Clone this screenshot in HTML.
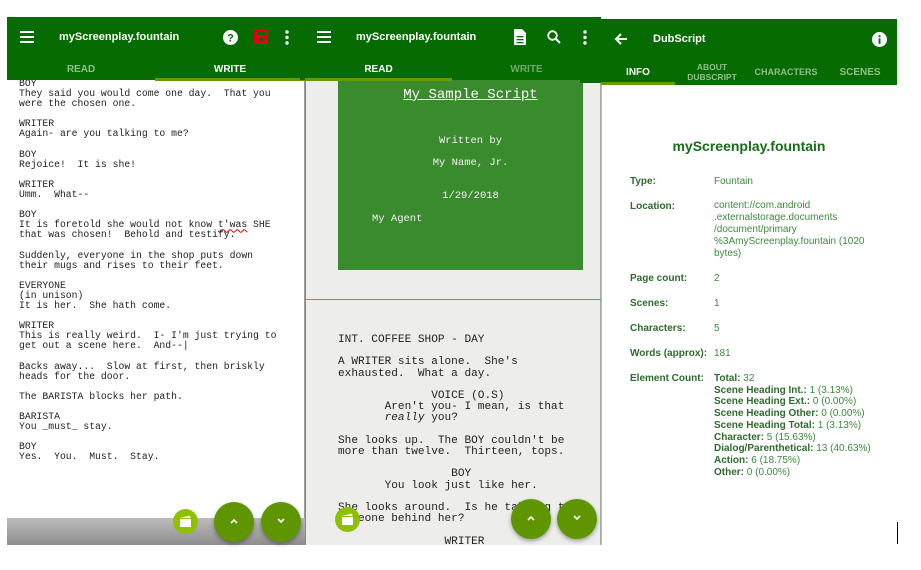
<!DOCTYPE html>
<html><head><meta charset="utf-8"><style>
*{margin:0;padding:0;box-sizing:border-box}
body{width:921px;height:570px;background:#fff;position:relative;overflow:hidden;font-family:"Liberation Sans",sans-serif}
.a{position:absolute}
.hdr{background:#066b00;color:#fff}
.title{font-size:11px;font-weight:bold;color:#fff;position:absolute}
.tab{position:absolute;font-size:10px;font-weight:bold;text-align:center}
.mono{font-family:"Liberation Mono",monospace;white-space:pre;position:absolute}
.p1 div{height:10.1px;line-height:10.1px}
.fab{position:absolute;border-radius:50%;background:#5f9600;box-shadow:0 2px 4px rgba(0,0,0,.35);color:#fff;text-align:center}
.sfab{position:absolute;border-radius:50%;background:#8dc100}
.lab{position:absolute;left:630px;font-size:10px;font-weight:bold;color:#2e6b2e}
.val{position:absolute;left:714px;font-size:10px;color:#3d8a3d;line-height:12px}
.val b{color:#2e6b2e}
</style></head><body>

<!-- Panel 1 -->
<div class="a" style="left:7px;top:80px;width:298px;height:438px;background:#fff;border-right:1px solid #999"></div>
<div class="a" style="left:7px;top:518px;width:298px;height:27px;background:linear-gradient(#bbb,#8e8e8e)"></div>
<div class="mono p1" style="left:19px;top:79px;font-size:9.75px;color:#222"><div>BOY</div><div>They said you would come one day.  That you</div><div>were the chosen one.</div><div> </div><div>WRITER</div><div>Again- are you talking to me?</div><div> </div><div>BOY</div><div>Rejoice!  It is she!</div><div> </div><div>WRITER</div><div>Umm.  What--</div><div> </div><div>BOY</div><div>It is foretold she would not know <span style="text-decoration:underline wavy #d00">t'was</span> SHE</div><div>that was chosen!  Behold and testify.</div><div> </div><div>Suddenly, everyone in the shop puts down</div><div>their mugs and rises to their feet.</div><div> </div><div>EVERYONE</div><div>(in unison)</div><div>It is her.  She hath come.</div><div> </div><div>WRITER</div><div>This is really weird.  I- I'm just trying to</div><div>get out a scene here.  And--|</div><div> </div><div>Backs away...  Slow at first, then briskly</div><div>heads for the door.</div><div> </div><div>The BARISTA blocks her path.</div><div> </div><div>BARISTA</div><div>You _must_ stay.</div><div> </div><div>BOY</div><div>Yes.  You.  Must.  Stay.</div></div>
<div class="a hdr" style="left:7px;top:17px;width:298px;height:63px"></div>
<svg class="a" style="left:20px;top:31px" width="14" height="12"><rect y="0" width="14" height="2" fill="#fff"/><rect y="5" width="14" height="2" fill="#fff"/><rect y="10" width="14" height="2" fill="#fff"/></svg>
<div class="title" style="left:59px;top:31px">myScreenplay.fountain</div>
<svg class="a" style="left:223px;top:30px" width="15" height="15"><circle cx="7.5" cy="7.5" r="7.5" fill="#fff"/><text x="7.5" y="11.5" font-size="11" font-weight="bold" text-anchor="middle" fill="#066b00" font-family="Liberation Sans">?</text></svg>
<svg class="a" style="left:254px;top:30px" width="14" height="14"><rect width="14" height="14" rx="1.5" fill="#e3001b"/><rect x="3" y="1" width="8" height="4" fill="#066b00"/><circle cx="7" cy="9.5" r="2.2" fill="#066b00"/></svg>
<svg class="a" style="left:285px;top:30px" width="4" height="15"><circle cx="2" cy="2" r="1.7" fill="#fff"/><circle cx="2" cy="7.5" r="1.7" fill="#fff"/><circle cx="2" cy="13" r="1.7" fill="#fff"/></svg>
<div class="tab" style="left:7px;top:64px;width:148px;color:#8fc08a">READ</div>
<div class="tab" style="left:155px;top:64px;width:150px;color:#fff">WRITE</div>
<div class="a" style="left:155px;top:78px;width:150px;height:3px;background:#6a9a00"></div>
<div class="sfab" style="left:173px;top:509px;width:25px;height:25px"></div>
<svg class="a" style="left:178px;top:514px" width="15" height="15"><path d="M2 4 L12 1.5 L12.5 4 Z" fill="#fff"/><rect x="2" y="5" width="11" height="8" fill="#fff"/></svg>
<div class="fab" style="left:214px;top:502px;width:40px;height:40px"></div>
<div class="fab" style="left:261px;top:502px;width:40px;height:40px"></div>
<svg class="a" style="left:229px;top:516px" width="10" height="10"><path d="M2 7 L5 4 L8 7" stroke="#fff" stroke-width="1.6" fill="none"/></svg>
<svg class="a" style="left:276px;top:516px" width="10" height="10"><path d="M2 3 L5 6 L8 3" stroke="#fff" stroke-width="1.6" fill="none"/></svg>

<!-- Panel 2 -->
<div class="a" style="left:305px;top:80px;width:296px;height:465px;background:#ededeb;border-left:1px solid #888;border-right:1px solid #aaa"></div>
<div class="a" style="left:338px;top:80px;width:245px;height:190px;background:#3a8a2e"></div>
<div class="a" style="left:305px;top:299px;width:296px;height:1px;background:#6a9e6a"></div>
<div class="a hdr" style="left:300px;top:17px;width:301px;height:63px"></div>
<div class="a hdr" style="left:580px;top:78px;width:21px;height:5px"></div>
<svg class="a" style="left:317px;top:31px" width="14" height="12"><rect y="0" width="14" height="2" fill="#fff"/><rect y="5" width="14" height="2" fill="#fff"/><rect y="10" width="14" height="2" fill="#fff"/></svg>
<div class="title" style="left:356px;top:31px">myScreenplay.fountain</div>
<svg class="a" style="left:514px;top:29px" width="12" height="16"><path d="M0 1 Q0 0 1 0 L8 0 L12 4 L12 15 Q12 16 11 16 L1 16 Q0 16 0 15Z" fill="#fff"/><rect x="2.5" y="7" width="7" height="1.3" fill="#066b00"/><rect x="2.5" y="10" width="7" height="1.3" fill="#066b00"/><rect x="2.5" y="13" width="7" height="1.3" fill="#066b00"/></svg>
<svg class="a" style="left:547px;top:30px" width="14" height="14"><circle cx="5.5" cy="5.5" r="4.3" stroke="#fff" stroke-width="1.8" fill="none"/><path d="M8.5 8.5 L13 13" stroke="#fff" stroke-width="2"/></svg>
<svg class="a" style="left:583px;top:30px" width="4" height="15"><circle cx="2" cy="2" r="1.7" fill="#fff"/><circle cx="2" cy="7.5" r="1.7" fill="#fff"/><circle cx="2" cy="13" r="1.7" fill="#fff"/></svg>
<div class="tab" style="left:305px;top:64px;width:147px;color:#fff">READ</div>
<div class="tab" style="left:452px;top:64px;width:149px;color:#6fa96a">WRITE</div>
<div class="a" style="left:305px;top:78px;width:147px;height:3px;background:#6a9a00"></div>
<div class="mono" style="left:338px;top:87px;width:265px;text-align:center;font-size:14px;color:#fff;text-decoration:underline">My Sample Script</div>
<div class="mono" style="left:338px;top:135px;width:265px;text-align:center;font-size:10.5px;color:#f4f4f4">Written by</div>
<div class="mono" style="left:338px;top:157px;width:265px;text-align:center;font-size:10.5px;color:#f4f4f4">My Name, Jr.</div>
<div class="mono" style="left:338px;top:190px;width:265px;text-align:center;font-size:10.5px;color:#f4f4f4">1/29/2018</div>
<div class="mono" style="left:372px;top:213px;font-size:10.5px;color:#f4f4f4">My Agent</div>
<div class="mono" style="left:338px;top:335px;font-size:11.1px;line-height:11.2px;color:#222">INT. COFFEE SHOP - DAY

A WRITER sits alone.  She's
exhausted.  What a day.

              VOICE (O.S)
       Aren't you- I mean, is that
       <i>really</i> you?

She looks up.  The BOY couldn't be
more than twelve.  Thirteen, tops.

                 BOY
       You look just like her.

She looks around.  Is he talking to
someone behind her?

                WRITER</div>
<div class="a" style="left:305px;top:545px;width:300px;height:25px;background:#fff"></div>
<div class="sfab" style="left:335px;top:507px;width:25px;height:25px"></div>
<svg class="a" style="left:340px;top:512px" width="15" height="15"><path d="M2 4 L12 1.5 L12.5 4 Z" fill="#fff"/><rect x="2" y="5" width="11" height="8" fill="#fff"/></svg>
<div class="fab" style="left:511px;top:499px;width:40px;height:40px"></div>
<div class="fab" style="left:557px;top:499px;width:40px;height:40px"></div>
<svg class="a" style="left:526px;top:513px" width="10" height="10"><path d="M2 7 L5 4 L8 7" stroke="#fff" stroke-width="1.6" fill="none"/></svg>
<svg class="a" style="left:572px;top:513px" width="10" height="10"><path d="M2 3 L5 6 L8 3" stroke="#fff" stroke-width="1.6" fill="none"/></svg>

<!-- Panel 3 -->
<div class="a" style="left:601px;top:85px;width:1px;height:460px;background:#bbb"></div>
<div class="a hdr" style="left:601px;top:19px;width:296px;height:66px"></div>
<svg class="a" style="left:614px;top:32px" width="14" height="14"><path d="M13 7 L2 7 M7 2 L2 7 L7 12" stroke="#fff" stroke-width="2" fill="none"/></svg>
<div class="title" style="left:653px;top:33px">DubScript</div>
<svg class="a" style="left:872px;top:32px" width="15" height="15"><circle cx="7.5" cy="7.5" r="7.5" fill="#fff"/><rect x="6.6" y="6.3" width="1.9" height="5.5" fill="#066b00"/><circle cx="7.5" cy="4.2" r="1.1" fill="#066b00"/></svg>
<div class="tab" style="left:601px;top:67px;width:74px;color:#fff">INFO</div>
<div class="tab" style="left:675px;top:63px;width:74px;color:#8fc08a;font-size:8.5px;line-height:9.5px">ABOUT<br>DUBSCRIPT</div>
<div class="tab" style="left:749px;top:67px;width:74px;color:#8fc08a;font-size:9px">CHARACTERS</div>
<div class="tab" style="left:823px;top:67px;width:74px;color:#8fc08a">SCENES</div>
<div class="a" style="left:601px;top:82px;width:74px;height:3px;background:#6a9a00"></div>
<div class="a" style="left:601px;top:138px;width:296px;text-align:center;font-size:14px;font-weight:bold;color:#1a6b1a">myScreenplay.fountain</div>
<div class="lab" style="top:176px">Type:</div><div class="val" style="top:176px">Fountain</div>
<div class="lab" style="top:201px">Location:</div><div class="val" style="top:200px">content://com.android<br>.externalstorage.documents<br>/document/primary<br>%3AmyScreenplay.fountain (1020<br>bytes)</div>
<div class="lab" style="top:273px">Page count:</div><div class="val" style="top:273px">2</div>
<div class="lab" style="top:298px">Scenes:</div><div class="val" style="top:298px">1</div>
<div class="lab" style="top:323px">Characters:</div><div class="val" style="top:323px">5</div>
<div class="lab" style="top:348px">Words (approx):</div><div class="val" style="top:348px">181</div>
<div class="lab" style="top:373px">Element Count:</div><div class="val" style="top:373px;line-height:11.7px"><b>Total:</b> 32<br><b>Scene Heading Int.:</b> 1 (3.13%)<br><b>Scene Heading Ext.:</b> 0 (0.00%)<br><b>Scene Heading Other:</b> 0 (0.00%)<br><b>Scene Heading Total:</b> 1 (3.13%)<br><b>Character:</b> 5 (15.63%)<br><b>Dialog/Parenthetical:</b> 13 (40.63%)<br><b>Action:</b> 6 (18.75%)<br><b>Other:</b> 0 (0.00%)</div>
<div class="a" style="left:897px;top:522px;width:1px;height:22px;background:#000"></div>
</body></html>
